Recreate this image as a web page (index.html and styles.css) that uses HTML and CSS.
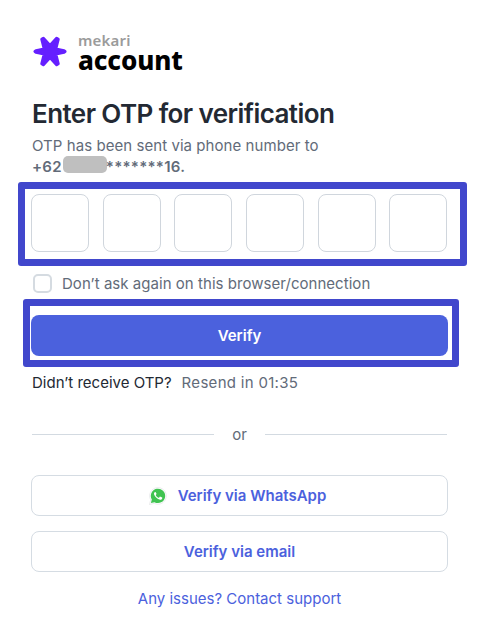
FILE: index.html
```html
<!DOCTYPE html>
<html lang="en">
<head>
  <meta charset="UTF-8" />
  <title>Mekari Account - Enter OTP</title>
  <link rel="stylesheet" href="styles.css">
</head>
<body>

<main class="page">
  <!-- Logo -->
  <div class="logo">
    <svg class="logo-star" viewBox="0 0 34 31" width="34" height="31">
      <path d="M2 15.5 L3 14.7 L11.2 12.9 L8.8 3.3 L10.4 2.2 L17 9.6 L23.6 2.2 L25.2 3.3 L22.8 12.9 L31 14.7 L32 15.5 L31 16.3 L22.8 18.1 L25.2 27.7 L23.6 28.8 L17 21.4 L10.4 28.8 L8.8 27.7 L11.2 18.1 L3 16.3 Z" />
    </svg>
    <div class="logo-text">
      <span class="logo-brand">mekari</span>
      <span class="logo-product">account</span>
    </div>
  </div>

  <h1>Enter OTP for verification</h1>
  <p class="sent">OTP has been sent via phone number to</p>
  <p class="phone">+62<span class="mask"></span><span class="stars">*******</span>16.</p>

  <!-- OTP digits -->
  <div class="otp">
    <input class="digit" type="text" maxlength="1">
    <input class="digit" type="text" maxlength="1">
    <input class="digit" type="text" maxlength="1">
    <input class="digit" type="text" maxlength="1">
    <input class="digit" type="text" maxlength="1">
    <input class="digit" type="text" maxlength="1">
  </div>

  <label class="remember">
    <input class="checkbox" type="checkbox">
    <span>Don’t ask again on this browser/connection</span>
  </label>

  <div class="verify">
    <button class="btn btn-primary"><span>Verify</span></button>
  </div>

  <p class="resend"><span class="question">Didn’t receive OTP?</span><span class="timer">Resend in 01:35</span></p>

  <div class="divider"><span>or</span></div>

  <!-- Other ways to verify -->
  <button class="btn btn-outline">
    <svg class="wa-icon" viewBox="0 0 18 18" width="18" height="18">
      <path class="wa-edge" d="M.5 17.5 L1.7 12.9 A8.3 8.3 0 1 1 5.2 16.3 Z" />
      <path class="wa-bubble" d="M1.9 16.1 L2.8 12.6 A7.2 7.2 0 1 1 5.5 15.2 Z" />
      <path class="wa-phone" d="M6.5 5.1 C6.1 5 5.6 5.1 5.2 5.8 C4.8 6.6 5 7.6 5.6 8.6 C6.6 10.3 8.1 11.8 10.2 12.5 C11.6 13 12.9 12.3 13.2 11.4 C13.4 10.7 13.2 10.5 12.7 10.3 L11.4 9.7 C11 9.5 10.8 9.7 10.6 10 L10 10.7 C9.8 10.9 9.6 10.9 9.3 10.7 C8.2 10.2 7.4 9.3 6.9 8.4 C6.8 8.2 6.9 8 7 7.8 L7.5 7.1 C7.6 6.9 7.5 6.7 7.4 6.4 Z" />
    </svg>
    <span>Verify via WhatsApp</span>
  </button>
  <button class="btn btn-outline"><span>Verify via email</span></button>

  <a class="support" href="#">Any issues? Contact support</a>
</main>

</body>
</html>
```
FILE: styles.css
```css
* {
  box-sizing: border-box;
}
body {
  margin: 0;
  font-family: Inter, "Liberation Sans", sans-serif;
  font-size: 15px;
  color: #626b79;
  background-color: #ffffff;
}
.page {
  width: 417px;
  margin-left: 31px;
  padding-top: 32px;
}

/* Logo */
.logo {
  display: flex;
  height: 44px;
  padding-left: 2px;
}
.logo-star {
  margin-top: 4px;
  fill: #651fff;
  stroke: #651fff;
  stroke-width: 3;
  stroke-linejoin: round;
}
.logo-text {
  display: flex;
  flex-direction: column;
  margin: 1px 0 0 11px;
  font-family: "Noto Sans", sans-serif;
}
.logo-brand {
  font-size: 15px;
  font-weight: 600;
  line-height: 15px;
  letter-spacing: 0.2px;
  color: #9b9b9b;
}
.logo-product {
  font-size: 26px;
  font-weight: 800;
  line-height: 25px;
  letter-spacing: -0.1px;
  color: #000000;
}

/* Heading and phone number */
h1 {
  margin: 22px 0 0 1px;
  font-size: 26px;
  font-weight: 600;
  line-height: 32px;
  letter-spacing: -0.58px;
  color: #232933;
  white-space: nowrap;
}
p {
  margin: 0 0 0 1px;
}
.sent {
  margin-top: 5px;
  line-height: 21px;
  letter-spacing: 0.06px;
}
.phone {
  display: flex;
  line-height: 22px;
  font-weight: 600;
  letter-spacing: 0.25px;
}
.mask {
  width: 44px;
  height: 17px;
  margin: 0 0 0 1px;
  border-radius: 5px;
  background-color: #bfbfbf;
}
.stars {
  margin-left: -1px;
}

/* OTP boxes with frame around them */
.otp {
  position: relative;
  display: flex;
  justify-content: space-between;
  width: 416.5px;
  margin-top: 16px;
}
.otp::before,
.verify::before {
  content: "";
  position: absolute;
  border: 7px solid #4147cc;
  border-radius: 3px;
  pointer-events: none;
}
.otp::before {
  inset: -12px -19px -14px -13px;
}
.digit {
  width: 58px;
  height: 58px;
  padding: 0;
  border: 1px solid #d0d6dd;
  border-radius: 8px;
  background-color: #ffffff;
  text-align: center;
  font-size: 24px;
}

.remember {
  display: flex;
  align-items: center;
  height: 20px;
  margin-top: 21px;
  letter-spacing: 0.04px;
}
.checkbox {
  appearance: none;
  width: 19px;
  height: 19px;
  margin: 0 10px 0 2px;
  border: 2px solid #d5dbe1;
  border-radius: 5px;
}

/* Buttons */
.btn {
  display: flex;
  align-items: center;
  justify-content: center;
  width: 100%;
  height: 41px;
  padding: 0;
  border-radius: 8px;
  font-family: inherit;
  font-size: 15px;
  font-weight: 600;
  cursor: pointer;
}
.verify {
  position: relative;
  margin-top: 22px;
}
.verify::before {
  inset: -16px -11px -11px -8px;
}
.btn-primary {
  border: none;
  background-color: #4b61dd;
  color: #ffffff;
}
.btn-outline {
  margin-bottom: 15px;
  border: 1px solid #d5dce3;
  background-color: #ffffff;
  color: #4b61dd;
}
.wa-icon {
  margin-right: 11px;
  margin-left: -4px;
}
.wa-edge {
  fill: #ffffff;
  stroke: #dedfe3;
  stroke-width: 0.6;
}
.wa-bubble {
  fill: #40c351;
}
.wa-phone {
  fill: #ffffff;
}

.resend {
  display: flex;
  margin-top: 16px;
  line-height: 22px;
}
.question {
  color: #232933;
}
.timer {
  margin-left: 10px;
  letter-spacing: 0.3px;
}

.divider {
  display: flex;
  align-items: center;
  gap: 18px;
  width: 415px;
  height: 20px;
  margin: 30px 0 31px 1px;
}
.divider::before,
.divider::after {
  content: "";
  flex: 1;
  height: 1px;
  background-color: #d3dae1;
}

.support {
  display: block;
  margin-top: 16px;
  line-height: 22px;
  text-align: center;
  color: #4b61dd;
  text-decoration: none;
}
```
